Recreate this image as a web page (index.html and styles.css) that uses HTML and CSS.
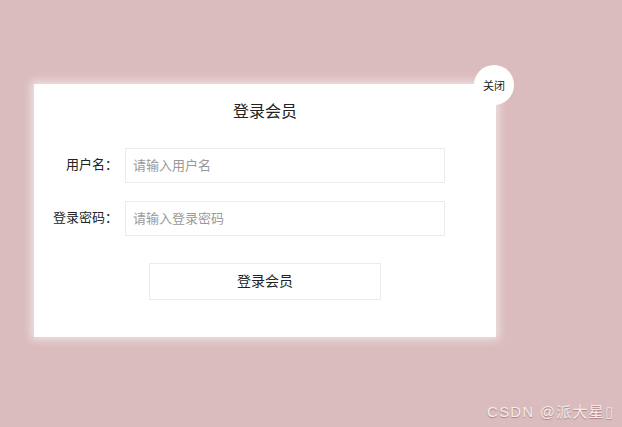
FILE: index.html
```html
<!DOCTYPE html>
<html lang="zh">
<head>
<meta charset="utf-8">
<title>登录会员</title>
<link rel="stylesheet" href="styles.css">
</head>
<body>
<div class="stage">
  <div class="card">
    <h2 class="title">登录会员</h2>
    <div class="row">
      <label class="label">用户名：</label>
      <input class="field" type="text" placeholder="请输入用户名">
    </div>
    <div class="row">
      <label class="label">登录密码：</label>
      <input class="field" type="password" placeholder="请输入登录密码">
    </div>
    <div class="actions">
      <button class="submit">登录会员</button>
    </div>
    <div class="close">关闭</div>
  </div>
</div>
<div class="watermark">CSDN @派大星&#x25AF;</div>
</body>
</html>
```
FILE: styles.css
```css
html, body {
  margin: 0;
  padding: 0;
  height: 100%;
}
body {
  background: #dbbcbe;
  font-family: "Noto Sans CJK SC", "Noto Sans", sans-serif;
  color: #333;
  position: relative;
  overflow: hidden;
}
.stage {
  padding: 84px 0 0 34px;
}
.card {
  position: relative;
  box-sizing: border-box;
  width: 462px;
  height: 253px;
  background: #fff;
  box-shadow: 0 0 8px 3px rgba(255, 255, 255, 0.55);
  padding-top: 14px;
}
.title {
  margin: 0;
  font-size: 16px;
  font-weight: normal;
  line-height: 24px;
  text-align: center;
  color: #222;
}
.row {
  display: flex;
  align-items: center;
  gap: 7px;
  margin-top: 18px;
}
.title + .row {
  margin-top: 26px;
}
.label {
  width: 84px;
  text-align: right;
  font-size: 13px;
  line-height: 18px;
  padding-bottom: 3px;
  color: #222;
}
.field {
  box-sizing: border-box;
  width: 320px;
  height: 35px;
  border: 1px solid #ebebeb;
  outline: none;
  padding: 0 7px 2px;
  font-family: inherit;
  font-size: 13px;
  color: #333;
}
.field::placeholder {
  color: #999;
}
.actions {
  display: flex;
  justify-content: center;
  margin-top: 27px;
}
.submit {
  box-sizing: border-box;
  width: 232px;
  height: 37px;
  background: #fff;
  border: 1px solid #ebebeb;
  padding: 0 0 3px;
  font-family: inherit;
  font-size: 14px;
  color: #222;
}
.close {
  position: absolute;
  left: 440px;
  top: -19px;
  width: 40px;
  height: 40px;
  border-radius: 50%;
  background: #fff;
  display: flex;
  align-items: center;
  justify-content: center;
  font-size: 11px;
  color: #222;
}
.watermark {
  position: absolute;
  right: 8px;
  bottom: 6px;
  font-family: "Liberation Sans", "Noto Sans CJK SC", sans-serif;
  font-size: 15px;
  letter-spacing: 1.2px;
  color: #f5eaeb;
  text-shadow: 0 1px 1px rgba(110, 80, 82, 0.5);
}
```
